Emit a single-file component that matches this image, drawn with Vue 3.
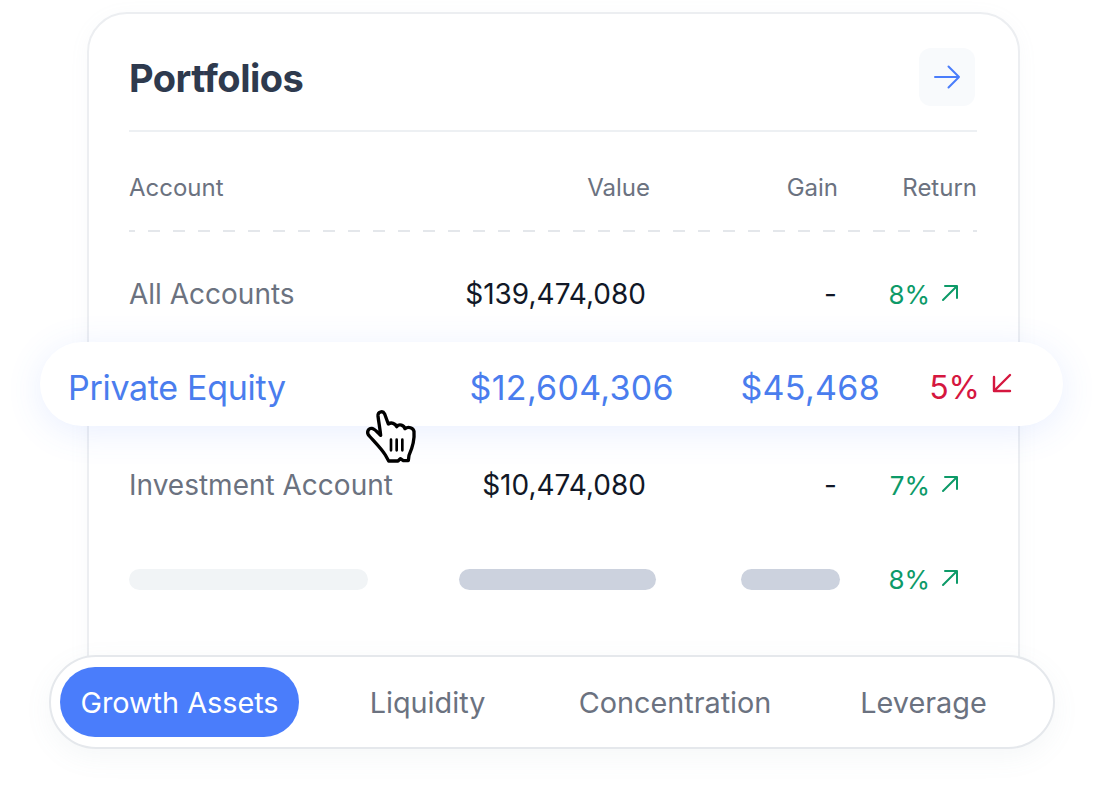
<template>
  <div class="scene">
    <section class="card">
      <header class="card-head">
        <h1>Portfolios</h1>
        <button class="go">
          <svg width="28" height="24" viewBox="0 0 28 24" fill="none" stroke="#4a7dfb" stroke-width="2" stroke-linecap="round" stroke-linejoin="round">
            <path d="M2 12h24M15.500 1.500 26 12 15.500 22.500" />
          </svg>
        </button>
      </header>

      <div class="cols table-head">
        <span>Account</span>
        <span class="num">Value</span>
        <span class="num">Gain</span>
        <span class="num">Return</span>
      </div>
      <div class="dashes"></div>

      <div class="cols row first">
        <span class="name">All Accounts</span>
        <span class="num amount">$139,474,080</span>
        <span class="num amount dash">-</span>
        <span class="ret up">8%
          <svg class="arrow" width="18" height="18" viewBox="0 0 18 18" fill="none" stroke="currentColor" stroke-width="2" stroke-linecap="round" stroke-linejoin="round"><path d="M2 16 16 2M4 2h12v12" /></svg>
        </span>
      </div>

      <div class="highlight">
        <span class="pe">Private Equity</span>
        <span class="num">$12,604,306</span>
        <span class="num">$45,468</span>
        <span class="ret down">5%
          <svg width="20" height="20" viewBox="0 0 20 20" fill="none" stroke="currentColor" stroke-width="2.400" stroke-linecap="round" stroke-linejoin="round"><path d="M18 2 2 18M2 4v14h16" /></svg>
        </span>
      </div>

      <div class="cols row second">
        <span class="name">Investment Account</span>
        <span class="num amount">$10,474,080</span>
        <span class="num amount dash">-</span>
        <span class="ret up">7%
          <svg class="arrow" width="18" height="18" viewBox="0 0 18 18" fill="none" stroke="currentColor" stroke-width="2" stroke-linecap="round" stroke-linejoin="round"><path d="M2 16 16 2M4 2h12v12" /></svg>
        </span>
      </div>

      <div class="skeleton-row">
        <div class="bar light"></div>
        <div class="bar value"></div>
        <div class="bar gain"></div>
        <span class="ret up">8%
          <svg class="arrow" width="18" height="18" viewBox="0 0 18 18" fill="none" stroke="currentColor" stroke-width="2" stroke-linecap="round" stroke-linejoin="round"><path d="M2 16 16 2M4 2h12v12" /></svg>
        </span>
      </div>
    </section>

    <nav class="tabs">
      <span class="tab active">Growth Assets</span>
      <span class="tab">Liquidity</span>
      <span class="tab">Concentration</span>
      <span class="tab">Leverage</span>
    </nav>

    <!-- pointer over the highlighted row -->
    <svg class="cursor" width="80" height="70" viewBox="0 0 240 210" fill="none" stroke="#000" stroke-linecap="round" stroke-linejoin="round">
      <path fill="#fff" stroke-width="10" d="M84 48C83 36 98 30 104 42L115 72C124 66 136 70 140 80C148 70 162 76 165 86C175 78 190 84 192 94C194 118 186 146 177 166L175 182H160L151 176L144 183H116L106 165C96 148 78 130 58 108C48 98 54 84 66 85C74 86 84 98 92 106C90 86 86 66 84 48Z" />
      <path stroke-width="8" d="M123 119v32M140 119v32M157 119v32" />
    </svg>
  </div>
</template>

<script setup>
</script>

<style scoped>
.scene {
  position: relative;
  width: 1104px;
  height: 801px;
  padding-top: 12px;
  box-sizing: border-box;
  overflow: hidden;
  background: #fff;
  font-family: Inter, "Noto Sans", sans-serif;
}

.card {
  width: 933px;
  height: 688px;
  margin-left: 87px;
  padding: 0 41px 0 40px;
  box-sizing: border-box;
  background: #fff;
  border: 2px solid #eceef1;
  border-radius: 40px;
  box-shadow: 0 4px 20px rgba(150, 165, 190, 0.06);
}

.card-head {
  display: flex;
  align-items: center;
  justify-content: space-between;
  height: 104px;
  padding: 12px 2px 0 0;
  border-bottom: 2px solid #edf0f3;
  box-sizing: content-box;
}

h1 {
  margin: 0;
  font-size: 38px;
  font-weight: 700;
  letter-spacing: -0.5px;
  color: #2e3a4e;
}

.go {
  display: flex;
  align-items: center;
  justify-content: center;
  width: 56px;
  height: 58px;
  margin-top: -2px;
  padding: 0;
  border: 0;
  border-radius: 12px;
  background: #f8fafc;
}

.cols {
  display: grid;
  grid-template-columns: 300px 221px 188px 139px;
  align-items: center;
}

.num {
  text-align: right;
}

.table-head {
  height: 86px;
  padding-top: 12px;
  box-sizing: content-box;
  font-size: 24px;
  color: #6b7280;
}

.dashes {
  height: 2px;
  background: repeating-linear-gradient(90deg, #e4e7eb 0 6px, transparent 6px 19px, #e4e7eb 19px 25px);
}

.row {
  font-size: 28px;
}

.row.first {
  height: 96px;
  padding-top: 14px;
}

.row.second {
  height: 118px;
}

.name {
  color: #6b7280;
  white-space: nowrap;
}

.amount {
  padding-right: 4px;
  color: #111827;
  white-space: nowrap;
}

.amount.dash {
  padding-right: 1px;
}

.ret {
  display: flex;
  align-items: center;
  justify-content: flex-end;
  gap: 11px;
  padding-right: 18px;
  font-size: 26px;
}

.up {
  color: #0d9a68;
}

.down {
  color: #d5173f;
}

.arrow {
  margin-top: -2px;
}

.highlight {
  position: relative;
  z-index: 1;
  display: grid;
  grid-template-columns: 336px 270px 206px 1fr;
  align-items: center;
  height: 84px;
  margin: 0 -86px 0 -89px;
  padding: 6px 0 0 28px;
  box-sizing: border-box;
  border-radius: 42px;
  background: #fff;
  box-shadow: 0 6px 36px rgba(74, 125, 251, 0.12);
  font-size: 34px;
  letter-spacing: 0.3px;
  color: #4a7dee;
  white-space: nowrap;
}

.highlight .pe {
  letter-spacing: -0.3px;
}

.highlight .ret {
  font-size: 32px;
  letter-spacing: 0;
  gap: 12px;
  padding-right: 51px;
}

.highlight .ret svg {
  margin-top: -8px;
}

.skeleton-row {
  display: grid;
  grid-template-columns: 330px 282px 99px 1fr;
  align-items: center;
  height: 70px;
}

.bar {
  height: 21px;
  border-radius: 11px;
  background: #ccd2de;
}

.bar.light {
  width: 239px;
  background: #f1f4f6;
}

.bar.value {
  width: 197px;
}

.bar.gain {
  width: 99px;
}

.tabs {
  position: relative;
  z-index: 1;
  display: grid;
  grid-template-columns: 239px 257px 238px 259px;
  align-items: center;
  width: 1006px;
  height: 94px;
  margin: -45px 0 0 49px;
  padding: 0 2px 0 9px;
  box-sizing: border-box;
  background: #fff;
  border: 2px solid #e5e8ec;
  border-radius: 47px;
  box-shadow: 0 8px 28px rgba(120, 135, 160, 0.07);
}

.tab {
  display: flex;
  align-items: center;
  justify-content: center;
  height: 70px;
  font-size: 28.800px;
  color: #6b7280;
  white-space: nowrap;
}

.tab.active {
  border-radius: 35px;
  background: #4a7dfb;
  color: #fff;
}

.cursor {
  position: absolute;
  left: 350px;
  top: 400px;
  z-index: 2;
}
</style>
